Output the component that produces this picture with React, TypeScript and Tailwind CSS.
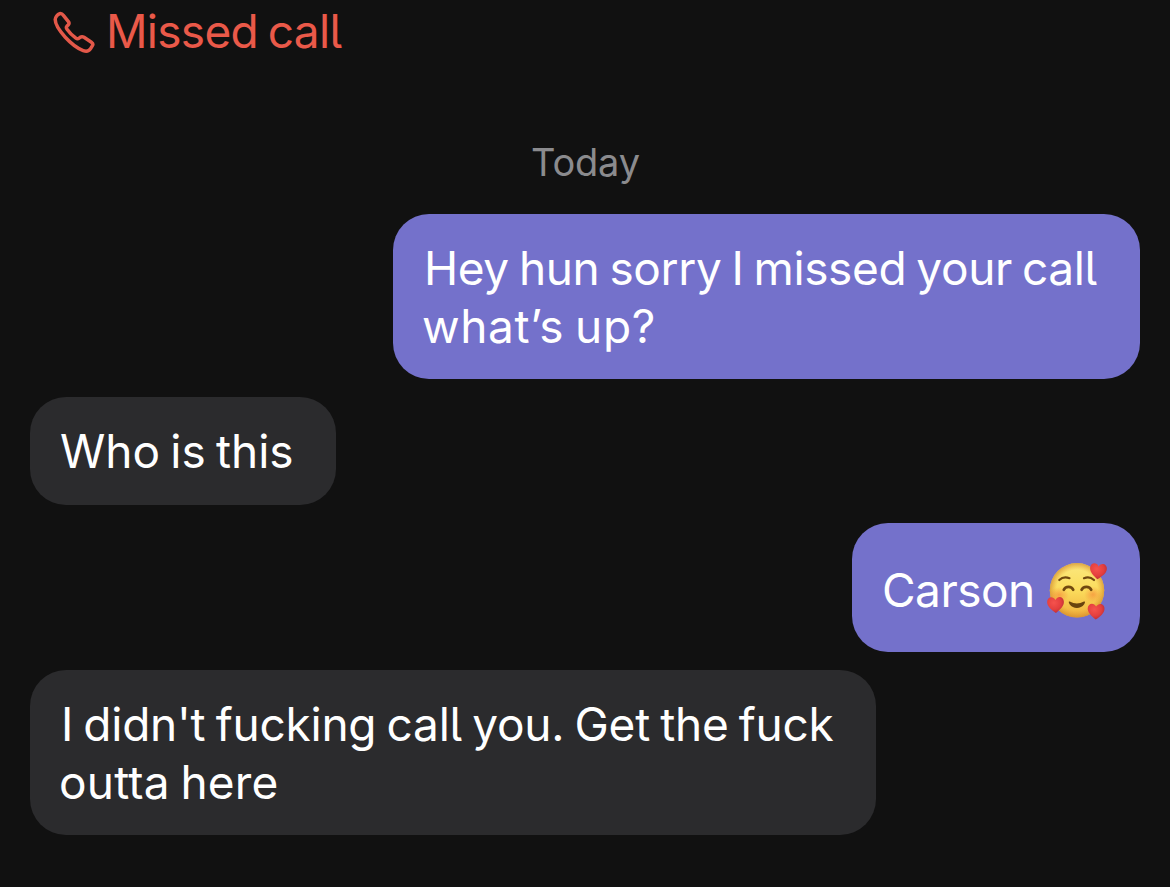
import type { ReactNode } from "react";

function PhoneIcon() {
  return (
    <svg className="mt-[11px] h-[43px] w-[43px] shrink-0" viewBox="0 0 43 43" fill="none" stroke="#e35849" strokeWidth="3.5" strokeLinejoin="round" strokeLinecap="round">
      <path d="M3.2 8.6C3.2 6.2 5.6 3.2 7.6 2.7C9.3 2.3 10.5 3.2 11.6 4.6L16.4 10.7C17.4 12 17.2 12.9 16.2 13.9L15 15.1C14.1 16.1 14.2 17.1 15 18.2C17.2 21.3 20.5 24.6 23.9 27.2C25 28 26 28 27.1 27.1L28.2 26.3C29.5 25.4 30.7 25.5 32 26.3L39.4 31.2C40.9 32.2 41.2 33.5 40.3 34.9L38.6 37.6C37 40.1 34.4 40.8 31.2 39.6C26 37.6 18.9 32.3 13.3 26.2C7.8 20.2 3.2 13.8 3.2 8.6Z" />
    </svg>
  );
}

function Heart({ x, y, rotate }: { x: number; y: number; rotate: number }) {
  return (
    <path
      d="M0 8.4C-4.6 4.8-8.4 1.6-8.4-2.6C-8.4-7.8-2.4-9.2 0-4.6C2.4-9.2 8.4-7.8 8.4-2.6C8.4 1.6 4.6 4.8 0 8.4Z"
      fill="url(#heart)"
      transform={`translate(${x} ${y}) rotate(${rotate})`}
    />
  );
}

function HeartsFace() {
  return (
    <svg className="h-[60px] w-[62px] shrink-0" viewBox="0 0 62 60">
      <defs>
        <linearGradient id="face" x1="0" y1="0" x2="0" y2="1">
          <stop offset="0" stopColor="#fbe87e" />
          <stop offset="0.5" stopColor="#fbdc5c" />
          <stop offset="1" stopColor="#efae3c" />
        </linearGradient>
        <radialGradient id="rim">
          <stop offset="0.75" stopColor="#e19a2e" stopOpacity="0" />
          <stop offset="1" stopColor="#d0882c" stopOpacity="0.7" />
        </radialGradient>
        <radialGradient id="blush">
          <stop offset="0" stopColor="#f58236" stopOpacity="0.6" />
          <stop offset="1" stopColor="#f58236" stopOpacity="0" />
        </radialGradient>
        <radialGradient id="heart" cx="0.4" cy="0.35" r="0.7">
          <stop offset="0" stopColor="#f5524d" />
          <stop offset="0.6" stopColor="#e43f3e" />
          <stop offset="1" stopColor="#b82d36" />
        </radialGradient>
      </defs>
      <circle cx="30" cy="29.3" r="27.2" fill="url(#face)" />
      <circle cx="30" cy="29.3" r="27.2" fill="url(#rim)" />
      <ellipse cx="12" cy="34" rx="10" ry="8" fill="url(#blush)" />
      <ellipse cx="46" cy="33.5" rx="9" ry="8" fill="url(#blush)" />
      <g fill="none" stroke="#70480f" strokeLinecap="round" strokeWidth="2.2">
        <path d="M12.3 19Q16.5 14.8 22.5 17.2" />
        <path d="M37 17.2Q42.5 14.8 47 19" />
        <path d="M16.8 28.8C18.4 24.8 24.6 24.8 26.2 28.8" strokeWidth="2.8" />
        <path d="M34.6 28.8C36.2 24.8 42.6 24.8 44.2 28.8" strokeWidth="2.8" />
      </g>
      <path d="M22.7 40.6Q29.8 44.6 37 40.6C38.6 40 38 42 37.2 43.2C33.6 48.2 26.2 48.2 22.6 43.2C21.8 42 21.2 40 22.7 40.6Z" fill="#69430e" />
      <Heart x={51.2} y={10} rotate={6} />
      <Heart x={8.6} y={43.6} rotate={-2} />
      <Heart x={49} y={50.2} rotate={2} />
    </svg>
  );
}

/** Lowercase l with a curved foot, used at the end of a word. */
function TailL() {
  return <span className="[font-feature-settings:'cv05']">l</span>;
}

function Bubble({ className, children }: { className: string; children: ReactNode }) {
  return (
    <div className={`rounded-[36px] px-[30px] text-[46px] leading-[58px] text-white [word-spacing:-2.5px] ${className}`}>
      {children}
    </div>
  );
}

export default function App() {
  return (
    <main className="flex h-[887px] w-[1170px] flex-col overflow-hidden whitespace-nowrap bg-[#111111] px-[30px] font-['Inter',sans-serif]">
      <div className="flex h-[136px] items-start pl-[22px] text-[#ea5949]">
        <PhoneIcon />
        <p className="ml-[11px] mt-[2px] text-[46px] leading-[58px] tracking-[-0.7px] [word-spacing:-2.5px]">
          Missed cal<TailL />
        </p>
      </div>
      <div className="h-[78px] pl-px text-center text-[38px] leading-[52px] tracking-[-0.2px] text-[#8b8b8e]">Today</div>
      <section className="flex flex-col gap-[18px]">
        <Bubble className="h-[165px] w-[747px] self-end bg-[#7471cb] pt-[25px]">
          <p className="pl-px tracking-[-0.37px]">Hey hun sorry I missed your cal<TailL /></p>
          <p className="-ml-px tracking-[0.6px]">what’s up?</p>
        </Bubble>
        <Bubble className="h-[108px] w-[306px] bg-[#2b2b2d] pt-[25px]">
          <p className="tracking-[-0.05px]">Who is this</p>
        </Bubble>
        <Bubble className="flex h-[129px] w-[288px] items-start self-end bg-[#7471cb] pt-[38px]">
          <p className="w-[165px] tracking-[-0.5px]">Carson</p>
          <HeartsFace />
        </Bubble>
        <Bubble className="h-[165px] w-[846px] bg-[#2b2b2d] pt-[25px]">
          <p className="pl-px tracking-[-0.23px]">I didn't fucking cal<TailL /> you. Get the fuck</p>
          <p className="-ml-px tracking-[0.2px]">outta here</p>
        </Bubble>
      </section>
    </main>
  );
}
